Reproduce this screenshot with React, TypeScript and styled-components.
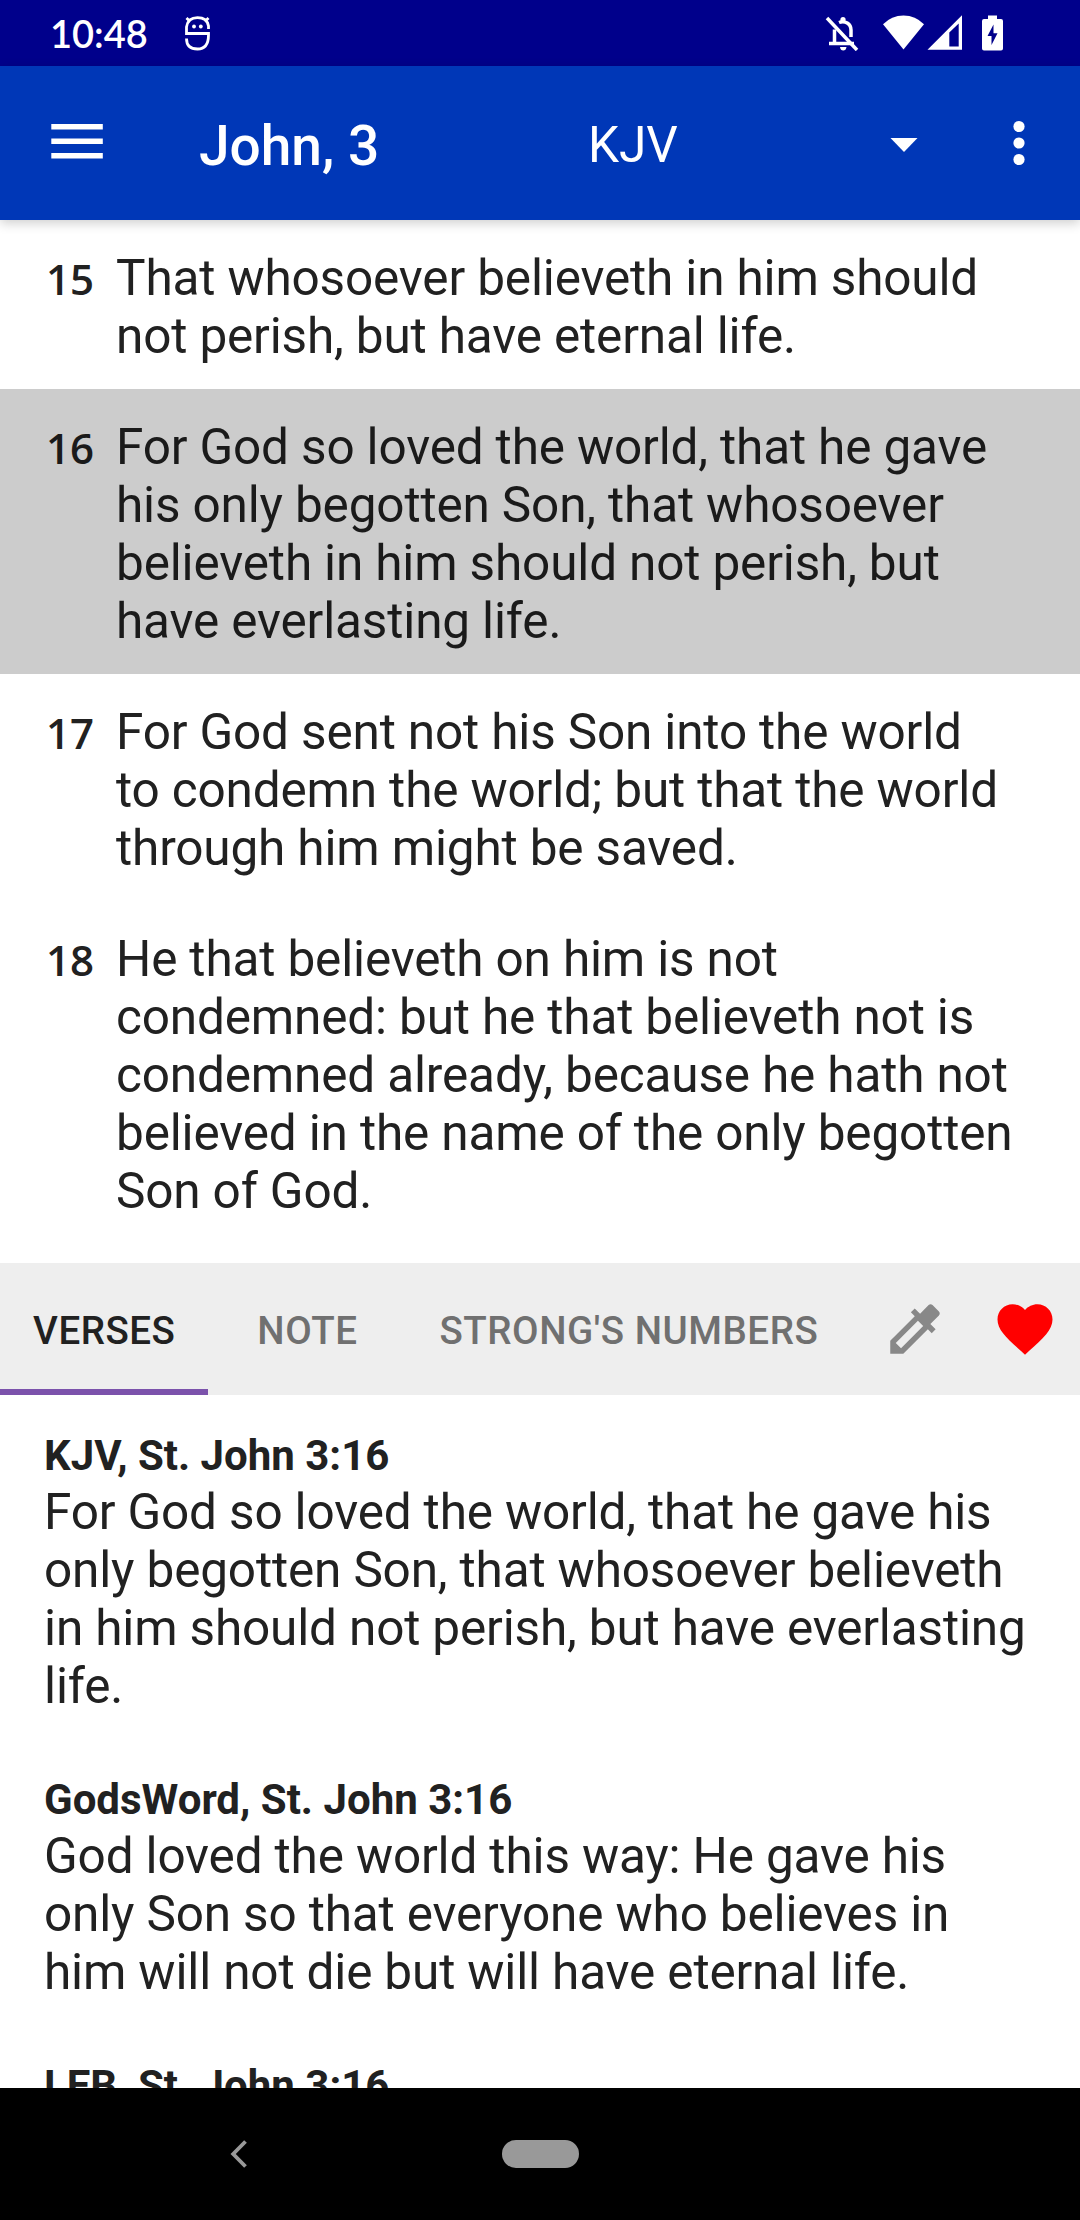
import React from "react";
import styled, { createGlobalStyle } from "styled-components";

const GlobalStyle = createGlobalStyle`
  * { box-sizing: border-box; }
  body { margin: 0; background: #fff; }
`;

const Screen = styled.div`
  display: flex;
  flex-direction: column;
  width: 1080px;
  height: 2220px;
  overflow: hidden;
  background: #fff;
  color: #212121;
  font-family: Roboto, "Liberation Sans", sans-serif;
`;

const StatusBar = styled.header`
  display: flex;
  align-items: center;
  flex: none;
  height: 66px;
  padding: 0 77px 0 50px;
  background: #00008b;
  color: #fff;
`;

const Clock = styled.span`
  width: 135px;
  font: 600 38px/64px Lato, sans-serif;
`;

const StatusIcons = styled.div`
  display: flex;
  align-items: center;
  margin-left: auto;
`;

const Icon = styled.svg<{ $gap?: number }>`
  display: block;
  flex: none;
  margin-left: ${(p) => p.$gap ?? 0}px;
`;

const AppBar = styled.nav`
  display: flex;
  align-items: center;
  flex: none;
  height: 154px;
  padding: 0 42px 0 51px;
  background: #0037b7;
  color: #fff;
  box-shadow: 0 3px 11px rgba(0, 0, 0, 0.2);
  z-index: 1;
`;

const BarButton = styled.button`
  display: flex;
  padding: 0;
  border: 0;
  background: none;
  color: inherit;
`;

const Title = styled.h1`
  width: 389px;
  margin: 6px 0 0 96px;
  font-size: 55px;
  font-weight: 500;
  line-height: 64px;
`;

const VersionPicker = styled.button`
  display: flex;
  align-items: center;
  justify-content: space-between;
  width: 330px;
  padding: 3px 0 0;
  border: 0;
  background: none;
  color: inherit;
  font: 400 49.5px/60px Roboto, sans-serif;
`;

const Chapter = styled.main`
  flex: none;
  height: 1043px;
  overflow: hidden;
`;

const VerseRow = styled.div<{ $selected?: boolean }>`
  display: flex;
  padding: 29px 40px 24px 46px;
  background: ${(p) => (p.$selected ? "#cccccc" : "transparent")};
  color: ${(p) => (p.$selected ? "#1a1a1a" : "#212121")};
`;

const VerseNumber = styled.span`
  flex: none;
  width: 70px;
  height: 58px;
  font: 600 42px/60px "Open Sans", "Noto Sans", sans-serif;
`;

const Passage = styled.p`
  margin: 0;
  font-size: 49.5px;
  line-height: 58px;
  letter-spacing: -0.16px;
  white-space: pre;
`;

const TabBar = styled.div`
  display: flex;
  flex: none;
  height: 132px;
  background: #eeeeee;
`;

const Tab = styled.button<{ $active?: boolean }>`
  min-width: 198px;
  height: 132px;
  padding: 10px 33px 0;
  border: 0;
  border-bottom: 6px solid ${(p) => (p.$active ? "#7b52ab" : "transparent")};
  background: none;
  color: ${(p) => (p.$active ? "#212121" : "#707070")};
  font: 500 38.5px/46px Roboto, sans-serif;
  letter-spacing: 0.54px;
  white-space: nowrap;
`;

const TabTools = styled.div`
  display: flex;
  align-items: center;
  margin-left: auto;
  padding-right: 22px;
`;

const Compare = styled.section`
  flex: none;
  height: 693px;
  padding: 34px 44px 0;
  overflow: hidden;
`;

const Entry = styled.article`
  margin-bottom: 58px;
`;

const Reference = styled.h2`
  margin: 0;
  font-size: 42px;
  font-weight: 700;
  line-height: 54px;
`;

const SystemNav = styled.footer`
  display: grid;
  grid-template-columns: 502px 77px;
  align-items: center;
  flex: none;
  height: 132px;
  background: #000;
`;

const Back = styled.div`
  padding-left: 230px;
`;

const HomePill = styled.div`
  height: 28px;
  border-radius: 14px;
  background: #999;
`;

const verses = [
  { n: 15, text: "That whosoever believeth in him should\nnot perish, but have eternal life." },
  {
    n: 16,
    selected: true,
    text: "For God so loved the world, that he gave\nhis only begotten Son, that whosoever\nbelieveth in him should not perish, but\nhave everlasting life.",
  },
  { n: 17, text: "For God sent not his Son into the world\nto condemn the world; but that the world\nthrough him might be saved." },
  {
    n: 18,
    text: "He that believeth on him is not\ncondemned: but he that believeth not is\ncondemned already, because he hath not\nbelieved in the name of the only begotten\nSon of God.",
  },
];

const tabs = ["VERSES", "NOTE", "STRONG'S NUMBERS"];

const translations = [
  {
    ref: "KJV, St. John 3:16",
    text: "For God so loved the world, that he gave his\nonly begotten Son, that whosoever believeth\nin him should not perish, but have everlasting\nlife.",
  },
  {
    ref: "GodsWord, St. John 3:16",
    text: "God loved the world this way: He gave his\nonly Son so that everyone who believes in\nhim will not die but will have eternal life.",
  },
  { ref: "LEB, St. John 3:16", text: "" },
];

export default function App() {
  return (
    <Screen>
      <GlobalStyle />
      <StatusBar>
        <Clock>10:48</Clock>
        <Icon width="26" height="36" viewBox="0 0 26 36" fill="none" stroke="#fff" strokeWidth="2.8">
          <path d="M23.500 14V11Q22 2.700 12.500 2.700T1.500 12V18.500H23.500V20Q23.500 34 12.500 34Q1.500 34 1.500 23.500" />
          <path d="M1.500 3L5 6.500M23.500 3L20 6.500" />
          <circle cx="9" cy="11.500" r="1.900" fill="#fff" stroke="none" />
          <circle cx="15.800" cy="11.500" r="1.900" fill="#fff" stroke="none" />
        </Icon>
        <StatusIcons>
          <Icon width="34" height="36" viewBox="0 0 34 36" fill="none" stroke="#fff" strokeWidth="3.500">
            <path d="M2 3L32 35" />
            <path d="M4 28.500H29M9.500 28V14.500M14 7.500C20 5 26 9 26 15V22" />
            <circle cx="18" cy="4.500" r="2.600" fill="#fff" stroke="none" />
            <path d="M15 32H21.500Q21 35.500 18.200 35.500Q15.500 35.500 15 32Z" fill="#fff" stroke="none" />
          </Icon>
          <Icon $gap={24} width="41" height="36" viewBox="0 0 41 36" fill="#fff">
            <path d="M0 9.300Q8.500 0.500 20.500 0.500T41 9.300L20.500 34.500Z" />
          </Icon>
          <Icon $gap={2} width="36" height="36" viewBox="0 0 36 36" fill="#fff">
            <path fillRule="evenodd" d="M1.500 34.700L36 0.300V34.700ZM23.300 31.500H32.700V8.500L23.300 17.500Z" />
          </Icon>
          <Icon $gap={20} width="21" height="36" viewBox="0 0 21 36" fill="#fff">
            <path fillRule="evenodd" d="M6 0.500H15V4H19Q21 4 21 6V33.600Q21 35.600 19 35.600H2Q0 35.600 0 33.600V6Q0 4 2 4H6ZM11.500 9.500L5.500 21H9.500V30L15.500 18.300H11.500Z" />
          </Icon>
        </StatusIcons>
      </StatusBar>
      <AppBar>
        <BarButton aria-label="Menu">
          <Icon width="52" height="38" viewBox="0 0 52 38" fill="#fff">
            <path d="M0.300 0H51.800V5.600H0.300ZM0.300 14.400H51.800V20H0.300ZM0.300 29H51.800V34.600H0.300Z" />
          </Icon>
        </BarButton>
        <Title>John, 3</Title>
        <VersionPicker>
          KJV
          <Icon width="28" height="14" viewBox="0 0 28 14" fill="#fff">
            <path d="M0.500 0H27.500L14 14Z" />
          </Icon>
        </VersionPicker>
        <BarButton aria-label="More options">
          <Icon $gap={95} width="12" height="46" viewBox="0 0 12 46" fill="#fff">
            <circle cx="6" cy="6.500" r="5.600" />
            <circle cx="6" cy="23" r="5.600" />
            <circle cx="6" cy="39.500" r="5.600" />
          </Icon>
        </BarButton>
      </AppBar>
      <Chapter>
        {verses.map((v) => (
          <VerseRow key={v.n} $selected={v.selected}>
            <VerseNumber>{v.n}</VerseNumber>
            <Passage>{v.text}</Passage>
          </VerseRow>
        ))}
      </Chapter>
      <TabBar>
        {tabs.map((t, i) => (
          <Tab key={t} $active={i === 0}>
            {t}
          </Tab>
        ))}
        <TabTools>
          <Icon width="66" height="66" viewBox="0 0 24 24" fill="#888">
            <path d="M20.710 5.630l-2.340-2.340c-.39-.39-1.020-.39-1.410 0l-3.120 3.120-1.930-1.910-1.410 1.410 1.420 1.420L3 16.250V21h4.750l8.920-8.920 1.420 1.420 1.410-1.410-1.920-1.920 3.120-3.120c.4-.4.4-1.030.010-1.420zM6.920 19L5 17.080l8.060-8.060 1.920 1.920L6.920 19z" />
          </Icon>
          <Icon $gap={44} width="66" height="66" viewBox="0 0 24 24" fill="#f00">
            <path d="M12 21.350l-1.450-1.320C5.400 15.360 2 12.280 2 8.500 2 5.420 4.420 3 7.500 3c1.740 0 3.410.810 4.500 2.090C13.090 3.810 14.760 3 16.500 3 19.580 3 22 5.420 22 8.500c0 3.780-3.400 6.860-8.550 11.540L12 21.350z" />
          </Icon>
        </TabTools>
      </TabBar>
      <Compare>
        {translations.map((t) => (
          <Entry key={t.ref}>
            <Reference>{t.ref}</Reference>
            <Passage>{t.text}</Passage>
          </Entry>
        ))}
      </Compare>
      <SystemNav>
        <Back>
          <Icon width="18" height="28" viewBox="0 0 18 28" fill="none" stroke="#999" strokeWidth="3.800">
            <path d="M15.500 1.500L3.200 14L15.500 26.500" />
          </Icon>
        </Back>
        <HomePill />
      </SystemNav>
    </Screen>
  );
}
